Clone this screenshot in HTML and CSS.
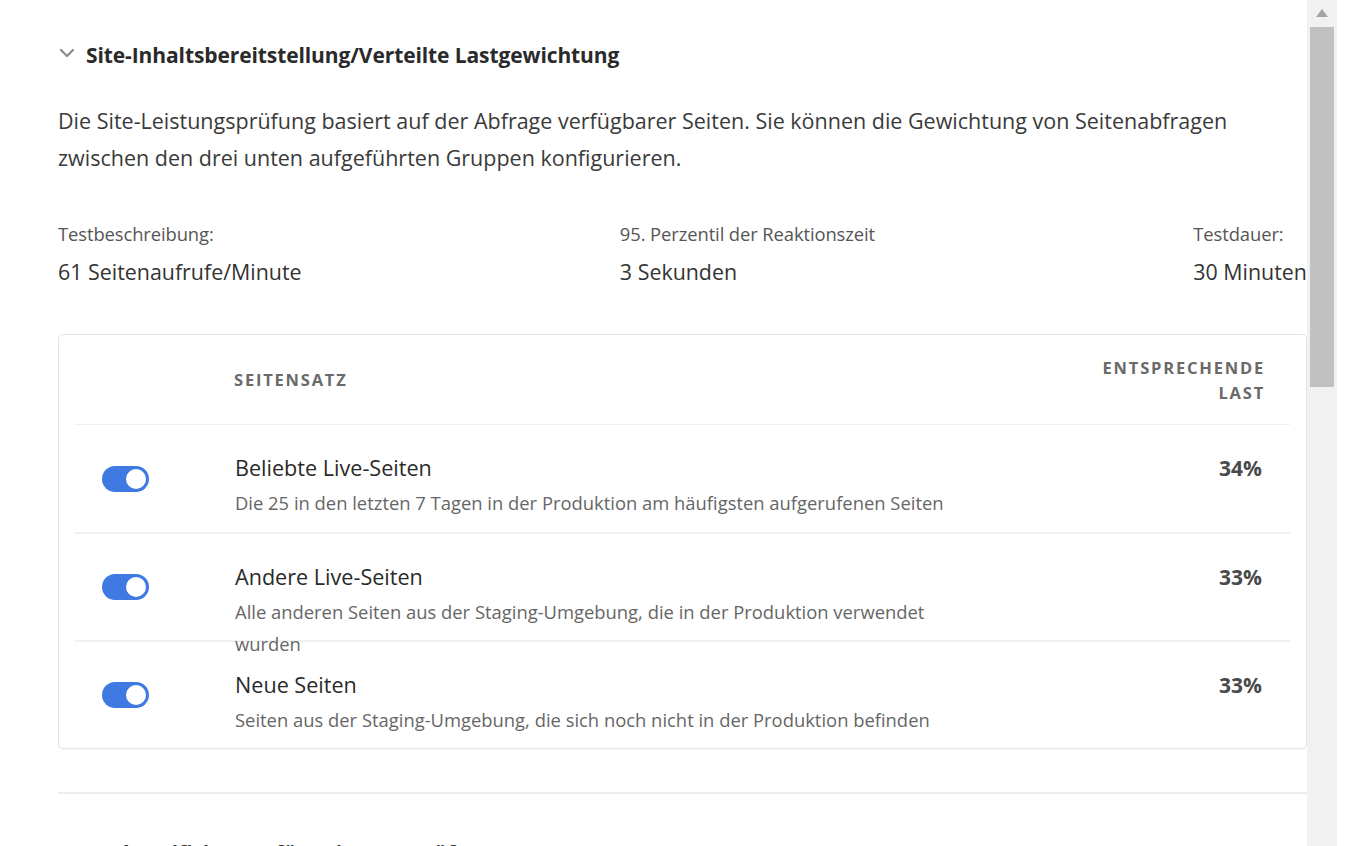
FILE: index.html
```html
<!DOCTYPE html>
<html lang="de">
<head>
<meta charset="utf-8">
<title>Site-Inhaltsbereitstellung</title>
<link rel="stylesheet" href="styles.css">
</head>
<body>
<div class="page">
  <main class="main">
    <section class="section">
      <h2 class="sec-title">
        <svg class="chev" width="16" height="10" viewBox="0 0 16 10"><path d="M2 2 L8 8 L14 2" fill="none" stroke="#8a8a8a" stroke-width="2.2" stroke-linecap="round" stroke-linejoin="round"/></svg>
        <span>Site-Inhaltsbereitstellung/Verteilte Lastgewichtung</span>
      </h2>
      <p class="intro">Die Site-Leistungsprüfung basiert auf der Abfrage verfügbarer Seiten. Sie können die Gewichtung von Seitenabfragen zwischen den drei unten aufgeführten Gruppen konfigurieren.</p>

      <div class="stats">
        <div class="stat">
          <div class="stat-label">Testbeschreibung:</div>
          <div class="stat-value">61 Seitenaufrufe/Minute</div>
        </div>
        <div class="stat">
          <div class="stat-label">95. Perzentil der Reaktionszeit</div>
          <div class="stat-value">3 Sekunden</div>
        </div>
        <div class="stat">
          <div class="stat-label">Testdauer:</div>
          <div class="stat-value">30 Minuten</div>
        </div>
      </div>

      <div class="card">
        <div class="thead">
          <div class="th-spacer"></div>
          <div class="th th-set">Seitensatz</div>
          <div class="th th-load">Entsprechende Last</div>
        </div>
        <div class="head-rule"></div>
        <div class="rows">
          <div class="row">
            <div class="cell-toggle"><span class="toggle"><span class="knob"></span></span></div>
            <div class="cell-text">
              <div class="row-title">Beliebte Live-Seiten</div>
              <div class="row-desc">Die 25 in den letzten 7 Tagen in der Produktion am häufigsten aufgerufenen Seiten</div>
            </div>
            <div class="cell-pct">34%</div>
          </div>
          <div class="row">
            <div class="cell-toggle"><span class="toggle"><span class="knob"></span></span></div>
            <div class="cell-text">
              <div class="row-title">Andere Live-Seiten</div>
              <div class="row-desc">Alle anderen Seiten aus der Staging-Umgebung, die in der Produktion verwendet wurden</div>
            </div>
            <div class="cell-pct">33%</div>
          </div>
          <div class="row">
            <div class="cell-toggle"><span class="toggle"><span class="knob"></span></span></div>
            <div class="cell-text">
              <div class="row-title">Neue Seiten</div>
              <div class="row-desc">Seiten aus der Staging-Umgebung, die sich noch nicht in der Produktion befinden</div>
            </div>
            <div class="cell-pct">33%</div>
          </div>
        </div>
      </div>
    </section>

    <div class="divider"></div>

    <section class="section">
      <h2 class="sec-title next">
        <svg class="chev" width="16" height="10" viewBox="0 0 16 10"><path d="M2 2 L8 8 L14 2" fill="none" stroke="#8a8a8a" stroke-width="2.2" stroke-linecap="round" stroke-linejoin="round"/></svg>
        <span>Authentifizierung für Leistungsprüfungen</span>
      </h2>
    </section>
  </main>

  <div class="scrollbar">
    <div class="scroll-arrow"></div>
    <div class="scroll-thumb"></div>
  </div>
  <div class="edge"></div>
</div>
</body>
</html>
```

FILE: styles.css
```css
* { box-sizing: border-box; }

html, body {
  margin: 0;
  padding: 0;
  background: #ffffff;
}

body {
  font-family: "Open Sans", "Noto Sans", "Liberation Sans", sans-serif;
  color: #2c2c2c;
  height: 846px;
  overflow: hidden;
}

.page {
  display: flex;
  height: 846px;
}

.main {
  width: 1307px;
  flex: none;
  padding: 40px 0 0 58px;
  overflow: hidden;
}

.sec-title {
  display: flex;
  align-items: center;
  margin: 0;
  height: 30px;
  font-size: 21px;
  font-weight: 700;
  line-height: 30px;
  letter-spacing: -0.1px;
  color: #2a2a2a;
}

.chev {
  margin: 0 11px 4px 1px;
  flex: none;
}

.intro {
  margin: 32px 0 0;
  font-size: 21.5px;
  line-height: 37px;
  color: #3a3a3a;
  max-width: 1200px;
}

.stats {
  display: flex;
  justify-content: space-between;
  margin-top: 46px;
}

.stat-label {
  font-size: 18.4px;
  line-height: 24px;
  color: #555555;
  letter-spacing: -0.1px;
}

.stat-value {
  margin-top: 12px;
  font-size: 21.4px;
  line-height: 28px;
  color: #333333;
}

.card {
  margin-top: 48px;
  border: 1px solid #e4e4e4;
  border-radius: 5px;
  box-shadow: 0 1px 2px rgba(0, 0, 0, 0.04);
  height: 415px;
}

.thead {
  display: flex;
  align-items: center;
  height: 89px;
  padding-right: 43px;
}

.th-spacer {
  width: 175px;
  flex: none;
}

.th {
  font-size: 16.5px;
  font-weight: 700;
  letter-spacing: 1.8px;
  text-transform: uppercase;
  color: #6a6a6a;
  line-height: 25px;
}

.th-set {
  flex: 1;
}

.th-load {
  width: 200px;
  text-align: right;
  margin-right: -2px;
}

.head-rule {
  height: 1px;
  margin: 0 286px 0 146px;
  background: #e4e4e4;
}

.rows {
  margin: 0 16px;
}

.row {
  display: flex;
  height: 108px;
  border-top: 2px solid #f0f0f0;
}

.row:first-child {
  border-top-width: 1px;
  margin-top: -1px;
}

.cell-toggle {
  width: 160px;
  flex: none;
  display: flex;
  align-items: center;
  padding-left: 27px;
}

.toggle {
  position: relative;
  display: block;
  width: 47px;
  height: 26px;
  border-radius: 13px;
  background: #3f7ae2;
}

.knob {
  position: absolute;
  top: 3px;
  right: 3px;
  width: 20px;
  height: 20px;
  border-radius: 50%;
  background: #ffffff;
}

.cell-text {
  flex: 1;
  padding-top: 29px;
}

.row-title {
  font-size: 21.6px;
  line-height: 28px;
  color: #2a2a2a;
}

.row-desc {
  margin-top: 5px;
  max-width: 735px;
  font-size: 18.4px;
  line-height: 32px;
  color: #666666;
}

.cell-pct {
  width: 200px;
  flex: none;
  padding: 29px 28px 0 0;
  text-align: right;
  font-size: 21px;
  font-weight: 700;
  line-height: 28px;
  color: #4a4a4a;
}

.divider {
  margin-top: 43px;
  height: 2px;
  background: #ececec;
}

.next {
  margin-top: 44px;
}

.scrollbar {
  width: 30px;
  flex: none;
  background: #f1f1f1;
  display: flex;
  flex-direction: column;
  align-items: center;
  padding-top: 9px;
}

.scroll-arrow {
  width: 0;
  height: 0;
  border-left: 6px solid transparent;
  border-right: 6px solid transparent;
  border-bottom: 8px solid #a3a3a3;
}

.scroll-thumb {
  margin-top: 10px;
  width: 24px;
  height: 360px;
  background: #c1c1c1;
}

.edge {
  flex: 1;
  background: #ffffff;
}
```
